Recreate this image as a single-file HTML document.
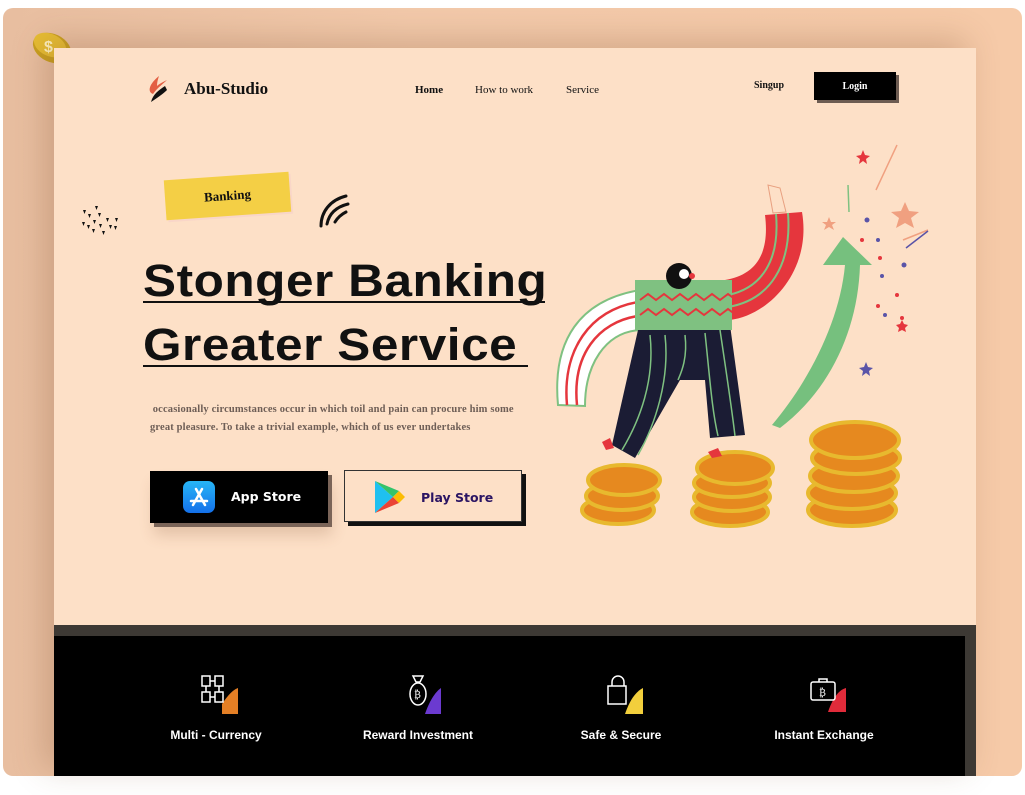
<!DOCTYPE html>
<html><head><meta charset="utf-8"><style>
*{margin:0;padding:0;box-sizing:border-box}
body{width:1025px;height:795px;background:#fff;position:relative;overflow:hidden;font-family:"Liberation Serif",serif}
.card{position:absolute;left:3px;top:8px;width:1019px;height:768px;border-radius:10px;background:linear-gradient(90deg,#e8bea0 0%,#f2c9aa 40%,#f6caa8 100%)}
.page{position:absolute;left:54px;top:48px;width:922px;height:728px;background:#fde0c7;box-shadow:-10px -8px 30px rgba(120,70,40,.25)}
.abs{position:absolute}
.nav{font-size:11px;font-weight:bold;color:#111}
.foot{position:absolute;left:54px;top:625px;width:922px;height:151px;background:#3d3934}
.footin{position:absolute;left:54px;top:636px;width:911px;height:140px;background:#000}
.ft{position:absolute;top:728px;color:#fff;font-family:"Liberation Sans",sans-serif;font-size:12px;font-weight:bold;text-align:center;width:180px}
h1{font-family:"Liberation Sans",sans-serif;font-weight:bold;font-size:45px;color:#111;position:absolute;left:143px;letter-spacing:0.5px;transform:scaleX(1.1);transform-origin:left;white-space:nowrap}
</style></head><body>
<div class="card"></div>
<svg class="abs" style="left:28px;top:28px" width="50" height="42"><ellipse cx="24" cy="20" rx="20" ry="14" fill="#c9a020" transform="rotate(25 24 20)"/><ellipse cx="22" cy="17" rx="17" ry="11" fill="#e6bd33" transform="rotate(25 22 17)"/><text x="16" y="24" fill="#fff3c0" font-size="16" font-weight="bold" font-family="Liberation Sans">$</text></svg>
<div class="page"></div>
<svg class="abs" style="left:145px;top:74px" width="26" height="30"><path d="M14 2 C4 10 2 18 8 20 C12 14 18 10 22 6 C18 8 14 10 12 12 C12 8 13 5 14 2Z" fill="#e35f43"/><path d="M20 12 C14 16 8 20 6 28 C12 24 18 20 22 16Z" fill="#111"/></svg>
<div class="abs" style="left:184px;top:79px;font-size:17px;font-weight:bold;color:#111">Abu-Studio</div>
<div class="abs nav" style="left:415px;top:84px">Home</div>
<div class="abs nav" style="left:475px;top:84px;font-weight:normal">How to work</div>
<div class="abs nav" style="left:566px;top:84px;font-weight:normal">Service</div>
<div class="abs nav" style="left:754px;top:80px;font-size:10px">Singup</div>
<div class="abs" style="left:817px;top:75px;width:82px;height:28px;background:#6d5c52"></div>
<div class="abs" style="left:814px;top:72px;width:82px;height:28px;background:#000;color:#fff;font-size:10px;font-weight:bold;text-align:center;line-height:30px">Login</div>
<div class="abs" style="left:167px;top:178px;width:125px;height:40px;background:#f9d6c8;transform:rotate(-4deg)"></div>
<div class="abs" style="left:165px;top:176px;width:125px;height:40px;background:#f4cf45;transform:rotate(-4deg);text-align:center;line-height:40px;font-weight:bold;font-size:13px;color:#111">Banking</div>
<svg class="abs" style="left:78px;top:202px" width="46" height="38" fill="#111"><path d="M4 20l3 0-1.5 4z M10 12l3 0-1.5 4z M9 23l3 0-1.5 4z M15 18l3 0-1.5 4z M17 4l3 0-1.5 4z M20 11l3 0-1.5 4z M21 22l3 0-1.5 4z M14 27l3 0-1.5 4z M24 29l3 0-1.5 4z M28 16l3 0-1.5 4z M31 23l3 0-1.5 4z M37 16l3 0-1.5 4z M36 24l3 0-1.5 4z M5 8l3 0-1.5 4z"/></svg>
<svg class="abs" style="left:316px;top:192px" width="40" height="38" fill="none" stroke="#111" stroke-width="3" stroke-linecap="round"><path d="M5 34 C5 20 14 8 30 4"/><path d="M11 32 C13 22 20 15 32 12"/><path d="M19 30 C22 25 26 22 30 20"/></svg>
<h1 style="top:255px">Stonger Banking</h1>
<div class="abs" style="left:143px;top:301px;width:402px;height:2px;background:#111"></div>
<h1 style="top:319px">Greater Service</h1>
<div class="abs" style="left:143px;top:365px;width:385px;height:2px;background:#111"></div>
<div class="abs" style="left:150px;top:401px;font-size:10.5px;font-weight:bold;color:#6e5e56;line-height:18px;white-space:nowrap;letter-spacing:0.15px">&nbsp;occasionally circumstances occur in which toil and pain can procure him some<br>great pleasure. To take a trivial example, which of us ever undertakes</div>
<div class="abs" style="left:154px;top:475px;width:178px;height:52px;background:#7a6458;box-shadow:0 8px 14px rgba(120,70,40,.2)"></div>
<div class="abs" style="left:150px;top:471px;width:178px;height:52px;background:#000"></div>
<div class="abs" style="left:183px;top:481px;width:32px;height:32px;border-radius:7px;background:linear-gradient(#27b6f6,#1470ea)"></div>
<svg class="abs" style="left:183px;top:481px" width="32" height="32" stroke="#fff" stroke-width="2.5" stroke-linecap="round" fill="none"><path d="M13 8 L22 24 M19 8 L10 24 M8 20 L24 20"/></svg>
<div class="abs" style="left:231px;top:489px;color:#fff;font-family:'DejaVu Sans',sans-serif;font-weight:bold;font-size:12.5px">App Store</div>
<div class="abs" style="left:348px;top:474px;width:178px;height:52px;background:#111"></div>
<div class="abs" style="left:344px;top:470px;width:178px;height:52px;background:#fde0c7;border:1px solid #333"></div>
<svg class="abs" style="left:373px;top:479px" width="32" height="36"><path d="M2 2 L20 18 L2 34Z" fill="#1fc0f0"/><path d="M2 2 L20 18 L26 12Z" fill="#34c36b"/><path d="M2 34 L20 18 L26 24Z" fill="#ea4335"/><path d="M26 12 L32 18 L26 24 L20 18Z" fill="#fbbc04"/></svg>
<div class="abs" style="left:421px;top:490px;color:#2a1463;font-family:'DejaVu Sans',sans-serif;font-weight:bold;font-size:12.5px">Play Store</div>
<svg class="abs" style="left:540px;top:140px" width="400" height="400">
<g stroke="#e8b92e" stroke-width="4" fill="#e6891f">
<ellipse cx="78" cy="370" rx="36" ry="14"/><ellipse cx="82" cy="356" rx="36" ry="14"/><ellipse cx="84" cy="340" rx="36" ry="15"/>
<ellipse cx="190" cy="372" rx="38" ry="14"/><ellipse cx="192" cy="357" rx="38" ry="14"/><ellipse cx="192" cy="343" rx="38" ry="14"/><ellipse cx="195" cy="328" rx="38" ry="16"/>
<ellipse cx="312" cy="370" rx="44" ry="16"/><ellipse cx="312" cy="353" rx="44" ry="16"/><ellipse cx="314" cy="336" rx="44" ry="16"/><ellipse cx="316" cy="318" rx="44" ry="16"/><ellipse cx="315" cy="300" rx="44" ry="18"/></g>
<path d="M232 285 C270 240 300 180 305 125 L283 125 L303 97 L332 125 L320 125 C318 190 290 250 240 288Z" fill="#76c07e"/>
<path d="M185 140 C215 135 230 115 225 75 L262 72 C272 130 230 175 190 180Z" fill="#e5363d"/>
<g stroke="#7fc181" stroke-width="2" fill="none"><path d="M188 155 C222 148 240 120 236 74"/><path d="M188 167 C230 160 252 125 248 73"/></g>
<path d="M233 73 L228 45 L240 48 L246 72Z" fill="#fde0c7" stroke="#e8a080"/>
<path d="M18 265 C12 200 40 160 100 150 L100 190 C65 192 45 225 45 266Z" fill="#fff" stroke="#7fc181" stroke-width="2"/>
<g stroke="#e5363d" stroke-width="2.5" fill="none"><path d="M27 265 C22 210 50 170 98 162"/><path d="M37 265 C32 215 58 182 98 176"/></g>
<path d="M98 190 L190 185 L205 295 L170 298 L165 240 L140 240 L95 318 L72 305 Z" fill="#1b1c34"/>
<g stroke="#7fc181" stroke-width="1.5" fill="none"><path d="M110 195 C115 240 100 280 82 310"/><path d="M125 195 C130 240 115 285 98 315"/><path d="M145 195 C148 220 140 235 138 240"/><path d="M165 193 C170 240 172 270 178 296"/><path d="M180 190 C186 230 192 270 195 296"/></g>
<rect x="95" y="140" width="97" height="50" fill="#7fc181"/>
<path d="M100 160 l8 -6 8 6 8 -6 8 6 8 -6 8 6 8 -6 8 6 8 -6 8 6 8 -6 8 6 M100 175 l8 -6 8 6 8 -6 8 6 8 -6 8 6 8 -6 8 6 8 -6 8 6 8 -6 8 6" stroke="#e5363d" stroke-width="2" fill="none"/>
<circle cx="139" cy="136" r="13" fill="#111"/><circle cx="144" cy="134" r="5" fill="#fff"/><circle cx="152" cy="136" r="3" fill="#e5363d"/>
<path d="M62 302 l8 -4 4 10 -8 2z M168 312 l10 -4 4 8 -10 2z" fill="#e5363d"/>
<g fill="#e5363d"><path d="M323 10 l2 5 5 1 -4 3 1 5 -4 -3 -4 3 1 -5 -4 -3 5 -1z"/><circle cx="362" cy="178" r="2"/><circle cx="322" cy="100" r="2"/><circle cx="340" cy="118" r="2"/><circle cx="357" cy="155" r="2"/><circle cx="338" cy="166" r="2"/><path d="M362 180 l2 4 4 1 -3 3 1 4 -4 -2 -4 2 1 -4 -3 -3 4 -1z"/></g>
<g fill="#5a54a8"><circle cx="327" cy="80" r="2.5"/><circle cx="338" cy="100" r="2"/><circle cx="364" cy="125" r="2.5"/><circle cx="342" cy="136" r="2"/><circle cx="345" cy="175" r="2"/><path d="M326 222 l2 5 5 1 -4 3 1 5 -4 -3 -4 3 1 -5 -4 -3 5 -1z"/></g>
<path d="M365 62 l4 9 10 1-8 6 3 10-9-5-9 5 3-10-8-6 10-1z" fill="#f0a080"/><path d="M289 77 l2 5 5 0-4 3 2 5-5-3-5 3 2-5-4-3 5 0z" fill="#f0a080"/>
<path d="M336 50 L357 5 M363 100 L388 90" stroke="#f0a080" stroke-width="1.5"/><path d="M366 108 L388 91" stroke="#5a54a8" stroke-width="1.5"/>
<path d="M308 45 L309 72" stroke="#7fc181" stroke-width="1.5"/>
</svg>
<div class="foot"></div><div class="footin"></div>
<svg class="abs" style="left:200px;top:674px" width="40" height="40" fill="none" stroke="#fff" stroke-width="1.5"><path d="M38 14 L38 40 L22 40 L22 30 C26 24 32 16 38 14Z" fill="#e47f25" stroke="none"/><rect x="2" y="2" width="8" height="10"/><rect x="15" y="2" width="8" height="10"/><rect x="2" y="18" width="8" height="10"/><rect x="15" y="18" width="8" height="10"/><path d="M10 7h5 M6 12v6 M19 12v6 M10 23h5"/></svg>
<svg class="abs" style="left:405px;top:674px" width="40" height="40" fill="none" stroke="#fff" stroke-width="1.5"><path d="M36 14 L36 40 L20 40 C24 28 30 18 36 14Z" fill="#6b3ad0" stroke="none"/><path d="M8 2h10 l-3 6 h-4z"/><ellipse cx="13" cy="20" rx="8" ry="11"/><text x="9" y="24" fill="#fff" stroke="none" font-size="10" font-family="DejaVu Sans">₿</text></svg>
<svg class="abs" style="left:605px;top:674px" width="40" height="40" fill="none" stroke="#fff" stroke-width="1.5"><path d="M38 14 L38 40 L20 40 C24 28 30 18 38 14Z" fill="#f2cf3c" stroke="none"/><path d="M7 12v-4a6 6 0 0 1 12 0v4"/><rect x="3" y="12" width="18" height="18"/></svg>
<svg class="abs" style="left:806px;top:674px" width="40" height="40" fill="none" stroke="#fff" stroke-width="1.5"><path d="M40 14 L40 38 L22 38 C26 26 32 16 40 14Z" fill="#e02b3a" stroke="none"/><rect x="5" y="8" width="24" height="18" rx="2"/><path d="M13 8v-3h8v3"/><text x="13" y="22" fill="#fff" stroke="none" font-size="10" font-family="DejaVu Sans">₿</text></svg>
<div class="ft" style="left:126px">Multi - Currency</div>
<div class="ft" style="left:328px">Reward Investment</div>
<div class="ft" style="left:531px">Safe &amp; Secure</div>
<div class="ft" style="left:734px">Instant Exchange</div>
</body></html>
